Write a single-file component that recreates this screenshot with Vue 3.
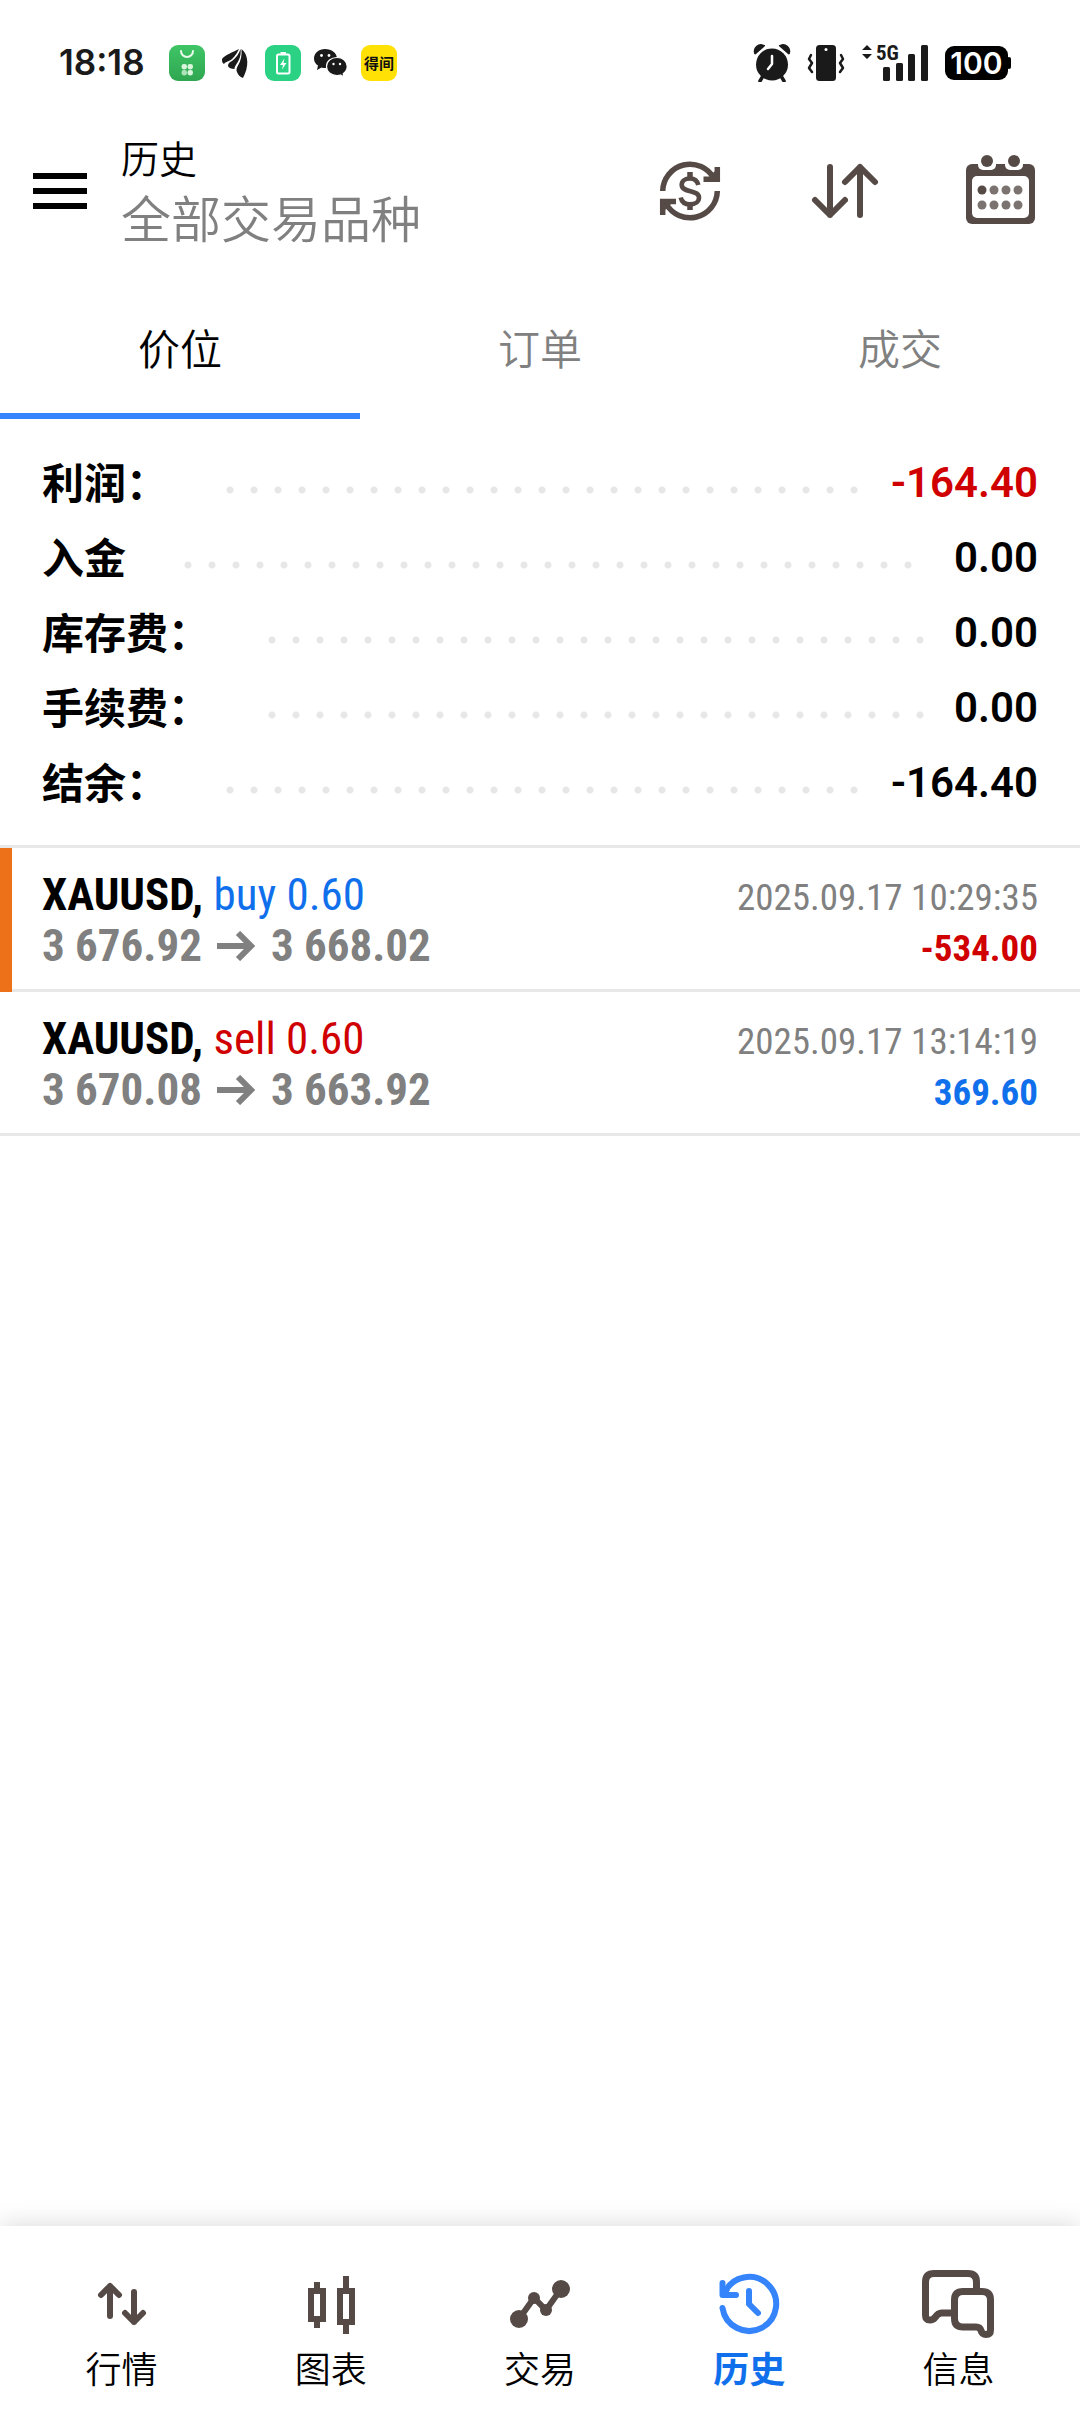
<script setup>
import { ref } from 'vue'

const tabs = ['价位', '订单', '成交']
const activeTab = ref(0)

const summary = [
  { label: '利润：', value: '-164.40', loss: true },
  { label: '入金', value: '0.00' },
  { label: '库存费：', value: '0.00' },
  { label: '手续费：', value: '0.00' },
  { label: '结余：', value: '-164.40' },
]

const deals = [
  { symbol: 'XAUUSD,', side: 'buy', volume: '0.60', open: '3 676.92', close: '3 668.02', time: '2025.09.17 10:29:35', profit: '-534.00', marked: true },
  { symbol: 'XAUUSD,', side: 'sell', volume: '0.60', open: '3 670.08', close: '3 663.92', time: '2025.09.17 13:14:19', profit: '369.60', marked: false },
]

const dots = [18, 30, 42, 54]
</script>

<template>
  <div class="page">
    <div class="status">
      <div class="status-group">
        <span class="clock">18:18</span>
        <svg class="app-icon" viewBox="0 0 36 36" aria-hidden="true">
          <defs>
            <linearGradient id="bag" x1="0" y1="0" x2="0" y2="1">
              <stop offset="0" stop-color="#3fc566" />
              <stop offset="1" stop-color="#2fa651" />
            </linearGradient>
          </defs>
          <rect width="36" height="36" rx="9" fill="url(#bag)" />
          <path d="M12 6a6 6 0 0 0 12 0" fill="none" stroke="#eafbe9" stroke-width="2" stroke-linecap="round" />
          <g fill="#d9f5dc">
            <rect x="12.5" y="19" width="5.5" height="5.5" rx="2.4" />
            <rect x="18.5" y="19" width="5.5" height="5.5" rx="2.4" />
            <rect x="12.5" y="25" width="5.5" height="5.5" rx="2.4" opacity=".75" />
            <rect x="18.5" y="25" width="5.5" height="5.5" rx="2.4" />
          </g>
        </svg>
        <svg class="app-icon" viewBox="0 0 36 36" aria-hidden="true">
          <g fill="#1a1a1a">
            <path d="M5 14C9 9 15 8 22 4c-3 6-6 10-10 12-2 1-4 1-5 3-2-1-2-3-2-5z" />
            <path d="M11 21c0-2 1-4 4-5 4-3 7-7 8.500-12 .8 6-1 11-4 15-1 1.500-2 3-2 5-3 0-6-1-6.500-3z" />
            <path d="M20 27c-1-2-.5-4 1-6.500 3-5 4-10 3.500-16.500C32 10 32 22 26 33c-3-1-5-3-6-6z" />
          </g>
        </svg>
        <svg class="app-icon" viewBox="0 0 36 36" aria-hidden="true">
          <rect width="36" height="36" rx="9" fill="#2bd283" />
          <rect x="12" y="9.5" width="12.5" height="19" rx="1.5" fill="none" stroke="#fff" stroke-width="2" />
          <rect x="15.5" y="7" width="5.5" height="2.5" fill="#fff" />
          <path d="M19.500 13.500l-4.500 6.500h3l-1 4.500 4.500-6.500h-3z" fill="#fff" />
        </svg>
        <svg class="app-icon" viewBox="0 0 36 36" aria-hidden="true">
          <path d="M12 4C6 4 1 8 1 13.500c0 3 1.500 5.500 4 7L4 25l4.500-2.500q2 .5 4 .5C19 23 24 19 24 13.500S18.500 4 12 4z" fill="#1a1a1a" />
          <path d="M24 12.500c-6 0-10.500 3.700-10.500 9s4.500 9 10.500 9q2 0 3.500-.5l3.500 2-.8-3.300c2.300-1.700 4-4.200 4-7.200 0-5.300-4.400-9-10.200-9z" fill="#1a1a1a" stroke="#fff" stroke-width="1.2" />
          <g fill="#fff">
            <circle cx="8.5" cy="10.5" r="1.4" /><circle cx="16" cy="10.5" r="1.4" />
            <circle cx="20.5" cy="19" r="1.2" /><circle cx="27" cy="19" r="1.2" />
          </g>
        </svg>
        <span class="badge">得间</span>
      </div>

      <div class="status-group status-right">
        <svg width="38" height="38" viewBox="0 0 38 38" aria-hidden="true">
          <g fill="#1a1a1a">
            <path d="M1 9a7 7 0 0 1 10-8c2 0 1 1 0 2L3 10c-1 1-2 0-2-1z" />
            <path d="M37 9a7 7 0 0 0-10-8c-2 0-1 1 0 2l8 7c1 1 2 0 2-1z" />
            <circle cx="19" cy="20.5" r="16" />
          </g>
          <path d="M10 32l-3 5M28 32l3 5" stroke="#1a1a1a" stroke-width="3.5" stroke-linecap="round" />
          <path d="M19 12v8l-4 5" fill="none" stroke="#fff" stroke-width="2.5" stroke-linecap="round" stroke-linejoin="round" />
        </svg>
        <svg width="38" height="38" viewBox="0 0 38 38" aria-hidden="true">
          <rect x="9" y="1" width="20" height="36" rx="3.5" fill="#1a1a1a" />
          <circle cx="19" cy="5.5" r="1.5" fill="#fff" />
          <path d="M4 11l-2 4 3 4-3 5 3 4M34 11l2 4-3 4 3 5-3 4" fill="none" stroke="#1a1a1a" stroke-width="2.5" stroke-linecap="round" stroke-linejoin="round" />
        </svg>
        <div class="signal">
          <svg width="68" height="38" viewBox="0 0 68 38" aria-hidden="true">
            <g fill="#1a1a1a">
              <path d="M6 1l5 5H1zM6 15l5-5H1z" />
              <rect x="22" y="23" width="7" height="14" rx="1.5" />
              <rect x="35" y="19" width="7" height="18" rx="1.5" />
              <rect x="47" y="10" width="7" height="27" rx="1.5" />
              <rect x="60" y="1" width="7" height="36" rx="1.5" />
            </g>
          </svg>
          <span class="net">5G</span>
        </div>
        <span class="battery">100</span>
      </div>
    </div>

    <header class="header">
      <button class="menu" type="button" aria-label="菜单"><i></i><i></i><i></i></button>
      <div class="titles">
        <h1>历史</h1>
        <p>全部交易品种</p>
      </div>
      <div class="actions">
        <button type="button" aria-label="货币">
          <svg class="glyph" viewBox="0 0 72 72">
            <g fill="none" stroke="currentColor" stroke-width="5.5">
              <path d="M8.700 36A27.300 27.300 0 0 1 60 23.500" />
              <path d="M63.300 12v12.300H49.500" />
              <path d="M63.300 36A27.300 27.300 0 0 1 12 48.500" />
              <path d="M8.700 60V46.500H22" />
              <path d="M44.300 30C43.300 25.700 40.500 23.500 36 23.500c-5 0-8.300 2.600-8.300 6.300 0 8.500 17.300 4.500 17.300 12.700 0 4-3.600 6.900-9 6.900-5 0-8.300-2.400-9.300-6.900" stroke-width="4.6" />
              <path d="M36 17v6M36 50v5" />
            </g>
            <path d="M61 16v8h-8zM11 55v-8h8z" fill="currentColor" />
          </svg>
        </button>
        <button type="button" aria-label="排序">
          <svg class="glyph" viewBox="0 0 72 72">
            <path d="M21 12v48M6 45l15 15 15-15M51 60V12M36 27l15-15 15 15" fill="none" stroke="currentColor" stroke-width="6" stroke-linecap="round" stroke-linejoin="round" />
          </svg>
        </button>
        <button type="button" aria-label="日历">
          <svg class="glyph" viewBox="0 0 72 72">
            <rect x="2" y="9" width="69" height="60" rx="6" fill="currentColor" />
            <rect x="8" y="21" width="57" height="42" rx="5" fill="#fff" />
            <rect x="14" y="0" width="18" height="15" rx="5" fill="#fff" />
            <rect x="41" y="0" width="18" height="15" rx="5" fill="#fff" />
            <circle cx="23" cy="6" r="6" fill="currentColor" />
            <circle cx="50" cy="6" r="6" fill="currentColor" />
            <template v-for="x in dots" :key="x">
              <circle :cx="x" cy="35" r="4.5" :fill="x === 18 ? '#554a46' : '#7b736f'" />
              <circle :cx="x" cy="50" r="4.5" fill="#7b736f" />
            </template>
          </svg>
        </button>
      </div>
    </header>

    <div class="tabs" role="tablist">
      <button
        v-for="(tab, i) in tabs"
        :key="tab"
        type="button"
        role="tab"
        :aria-selected="i === activeTab"
        :class="{ active: i === activeTab }"
        @click="activeTab = i"
      >{{ tab }}</button>
    </div>

    <main class="content">
      <dl class="summary">
        <div v-for="row in summary" :key="row.label" class="summary-row">
          <dt>{{ row.label }}</dt>
          <dd :class="{ loss: row.loss }">{{ row.value }}</dd>
        </div>
      </dl>

      <ul class="deals">
        <li v-for="deal in deals" :key="deal.time" :class="{ marked: deal.marked }">
          <div class="line">
            <span class="name"><b>{{ deal.symbol }}</b> <span :class="deal.side">{{ deal.side }} {{ deal.volume }}</span></span>
            <time>{{ deal.time }}</time>
          </div>
          <div class="line">
            <span class="prices">
              {{ deal.open }}
              <svg class="arrow" viewBox="0 0 39 30" aria-label="→"><path d="M0 15h34M21 2l13 13-13 13" fill="none" stroke="currentColor" stroke-width="6" /></svg>
              {{ deal.close }}
            </span>
            <span class="profit" :class="deal.profit.startsWith('-') ? 'sell' : 'buy'">{{ deal.profit }}</span>
          </div>
        </li>
      </ul>
    </main>

    <nav class="nav">
      <a href="#quotes">
        <svg class="glyph" viewBox="0 0 72 72">
          <path d="M24 48V18M15 27l9-9 9 9M48 24v30M39 45l9 9 9-9" fill="none" stroke="currentColor" stroke-width="6" stroke-linecap="round" stroke-linejoin="round" />
        </svg>
        <span>行情</span>
      </a>
      <a href="#chart">
        <svg class="glyph" viewBox="0 0 72 72">
          <g fill="none" stroke="currentColor" stroke-width="6">
            <path d="M16 23h12v28H16zM22 14v9M22 51v9" />
            <path d="M45 23h12v31H45zM51 8v15M51 54v12" />
          </g>
        </svg>
        <span>图表</span>
      </a>
      <a href="#trade">
        <svg class="glyph" viewBox="0 0 72 72">
          <path d="M15 51l15-21 12 12 15-21" fill="none" stroke="currentColor" stroke-width="6" />
          <g fill="currentColor">
            <circle cx="15" cy="51" r="9" /><circle cx="30" cy="30" r="6" />
            <circle cx="42" cy="42" r="6" /><circle cx="57" cy="21" r="9" />
          </g>
        </svg>
        <span>交易</span>
      </a>
      <a href="#history" class="current" aria-current="page">
        <svg class="glyph" viewBox="0 0 72 72">
          <g fill="none" stroke="currentColor" stroke-width="6" stroke-linecap="round" stroke-linejoin="round">
            <path d="M9.500 40A27 27 0 1 0 11.500 25" />
            <path d="M9.500 15v12H23" />
            <path d="M36 23v13l9 9" />
          </g>
          <path d="M9 18l8 4-4 6z" fill="currentColor" />
        </svg>
        <span>历史</span>
      </a>
      <a href="#messages">
        <svg class="glyph" viewBox="0 0 72 72">
          <g fill="none" stroke="currentColor" stroke-width="7" stroke-linejoin="round">
            <path d="M54.500 22v-8q0-8.500-8.500-8.500H12q-8.500 0-8.500 8.500v33q0 5 4.500 5 3 0 5-2.500 3-4.500 6.500-4.500H32" />
            <path d="M41 23.500h19q8.500 0 8.500 8.500v30q0 4.500-4.500 4.500-4 0-5-4-1-3.500-5-3.500H41q-8.500 0-8.500-8.500V32q0-8.500 8.500-8.500z" />
          </g>
        </svg>
        <span>信息</span>
      </a>
    </nav>
  </div>
</template>

<style>
body {
  margin: 0;
  background: #fff;
}
</style>

<style scoped>
* {
  box-sizing: border-box;
}

.page {
  display: flex;
  flex-direction: column;
  min-height: 100vh;
  background: #fff;
  color: #000;
  font-family: Roboto, "Noto Sans CJK SC", sans-serif;
}

button {
  padding: 0;
  border: 0;
  background: none;
  color: inherit;
  font: inherit;
}

svg {
  display: block;
}

/* status bar */
.status {
  display: flex;
  justify-content: space-between;
  padding: 28px 72px 0 59px;
  height: 98px;
  color: #1a1a1a;
}

.status-group {
  display: flex;
  align-items: center;
  gap: 12px;
}

.clock {
  width: 98px;
  padding-bottom: 2px;
  font: 600 35px/40px Inter, sans-serif;
}

.app-icon {
  width: 36px;
  height: 36px;
}

.badge {
  width: 36px;
  border-radius: 9px;
  background: #ffe105;
  color: #111;
  font: 700 15px/36px "Noto Sans CJK SC", sans-serif;
  text-align: center;
}

.status-right {
  gap: 16px;
}

.signal {
  position: relative;
}

.net {
  position: absolute;
  top: 0;
  left: 15px;
  font: 700 21px/18px "Roboto Condensed", Roboto, sans-serif;
}

.battery {
  position: relative;
  width: 63px;
  border-radius: 9px;
  background: #000;
  color: #fff;
  font: 600 30px/34px Inter, sans-serif;
  text-align: center;
}

.battery::after {
  content: "";
  position: absolute;
  top: 11px;
  right: -3px;
  width: 4px;
  height: 12px;
  border-radius: 2px;
  background: #000;
}

/* header */
.header {
  display: flex;
  align-items: center;
  height: 186px;
  padding: 0 44px 0 33px;
}

.menu {
  display: flex;
  flex-direction: column;
  gap: 9px;
  width: 54px;
}

.menu i {
  height: 6px;
  background: #000;
}

.titles {
  flex: 1;
  margin-left: 34px;
}

.titles h1,
.titles p {
  margin: 0;
  font-weight: 350;
}

.titles h1 {
  padding-bottom: 2px;
  font-size: 38px;
  line-height: 58px;
}

.titles p {
  color: #808080;
  font-size: 50px;
  line-height: 60px;
}

.actions {
  display: flex;
  gap: 83px;
  color: #554a46;
}

.glyph {
  width: 72px;
  height: 72px;
}

/* tabs */
.tabs {
  display: flex;
}

.tabs button {
  flex: 1;
  height: 135px;
  padding-bottom: 5px;
  border-bottom: 6px solid transparent;
  color: #808080;
  font-size: 42px;
  font-weight: 350;
}

.tabs .active {
  border-color: #3584fc;
  color: #000;
}

/* summary */
.content {
  flex: 1;
}

.summary {
  margin: 0;
  padding: 26px 42px 25px;
  border-bottom: 3px solid #e8e8e8;
}

.summary-row {
  display: flex;
  align-items: center;
  height: 75px;
  font-size: 42px;
  font-weight: 700;
}

.summary-row::before {
  content: "";
  order: 1;
  flex: 1;
  height: 8px;
  margin: 14px 26px 0 58px;
  background: radial-gradient(circle at 4px 4px, #e7e7e7 3px, transparent 4px) 0 0 / 24px 8px repeat-x;
}

.summary dt {
  padding-bottom: 5px;
}

.summary dd {
  order: 2;
  margin: 0;
  font-weight: 600;
}

.loss,
.sell {
  color: #d00000;
}

.buy {
  color: #1070ec;
}

/* deals */
.deals {
  margin: 0;
  padding: 0;
  list-style: none;
  font-family: "Roboto Condensed", "Liberation Sans Narrow", Roboto, sans-serif;
}

.deals li {
  position: relative;
  padding: 21px 42px 18px;
  border-bottom: 3px solid #e8e8e8;
}

.marked::before {
  content: "";
  position: absolute;
  top: 0;
  bottom: -3px;
  left: 0;
  width: 12px;
  background: #ec7119;
}

.line {
  display: flex;
  justify-content: space-between;
  align-items: baseline;
  height: 51px;
  font-size: 45px;
  line-height: 51px;
  white-space: nowrap;
}

.prices {
  display: flex;
  align-items: center;
  gap: 15px;
  color: #808080;
  font-weight: 700;
}

.arrow {
  width: 39px;
  height: 30px;
}

time {
  color: #808080;
  font-size: 37px;
}

.profit {
  font-size: 37px;
  font-weight: 700;
}

/* bottom navigation */
.nav {
  display: flex;
  height: 186px;
  padding: 42px 17px 0;
  background: #fff;
  box-shadow: 0 0 24px rgba(0, 0, 0, 0.16);
}

.nav a {
  display: flex;
  flex: 1;
  flex-direction: column;
  align-items: center;
  color: #554a46;
  text-decoration: none;
}

.nav span {
  color: #000;
  font-size: 36px;
  font-weight: 350;
  line-height: 62px;
}

.nav .current {
  color: #3584fc;
}

.nav .current span {
  color: #1070ec;
  font-weight: 700;
}
</style>
